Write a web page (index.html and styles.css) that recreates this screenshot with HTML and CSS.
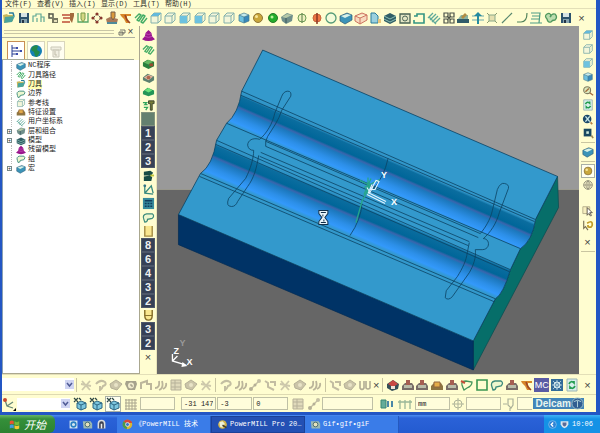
FILE: index.html
```html
<!DOCTYPE html>
<html lang="zh-CN">
<head>
<meta charset="utf-8">
<title>PowerMILL Pro</title>
<link rel="stylesheet" href="styles.css">
</head>
<body>
<svg class="defs" aria-hidden="true">
<symbol id="open" viewBox="0 0 14 14"><path d="M1 4l4-1 1 1 5 0v6l-9 2z" fill="#c7b85c"/><path d="M3 6l10-1-3 6-8 1z" fill="#4aa39b"/><path d="M7 2l4 0 1 3" fill="none" stroke="#287d9c" stroke-width="1.5"/></symbol>
<symbol id="save" viewBox="0 0 14 14"><path d="M2 2h10v10H2z" fill="#2c526e"/><path d="M4 2h6v4H4z" fill="#d6e3e5"/><path d="M4 8h6v4H4z" fill="#87a3ae"/><path d="M5 9h2v3H5z" fill="#234"/></symbol>
<symbol id="path" viewBox="0 0 14 14"><path d="M1 11V5h3V3h5v8M5 11V7M9 6h3v5" fill="none" stroke="#5fa894" stroke-width="1.2"/></symbol>
<symbol id="mill" viewBox="0 0 14 14"><path d="M3 2v5h5M3 3h4v3" fill="none" stroke="#56594c" stroke-width="1.500"/><path d="M6 7h6v5H6z" fill="#777860"/><path d="M8 9h3v2H8z" fill="#e6e0bc"/></symbol>
<symbol id="feed" viewBox="0 0 14 14"><path d="M1 4h8M2 7h7M1 11h8" stroke="#bd4c36" stroke-width="1.600"/><path d="M9 2h4v3l-2 7-2-3z" fill="#a46a3c"/></symbol>
<symbol id="uu" viewBox="0 0 14 14"><path d="M2 2v9h10V2" fill="none" stroke="#56a567" stroke-width="1.300"/><path d="M5 2h4v6l-2 3-2-3z" fill="#d5d884" stroke="#789b48"/></symbol>
<symbol id="dots" viewBox="0 0 14 14"><path d="M7 3l4 4-4 4-4-4z" fill="none" stroke="#555" stroke-dasharray="2 1"/><g fill="#87382d"><circle cx="7" cy="3" r="1.600"/><circle cx="3" cy="7" r="1.600"/><circle cx="11" cy="7" r="1.600"/><circle cx="7" cy="11" r="1.600"/></g></symbol>
<symbol id="tray" viewBox="0 0 14 14"><path d="M1 8l4-2 8 2-1 4H2z" fill="#a97958"/><path d="M2 11h10v2H2z" fill="#4d8b9b"/><path d="M6 1h4v5L8 9 6 6z" fill="#db9b3b" stroke="#77604a"/></symbol>
<symbol id="orange" viewBox="0 0 14 14"><path d="M1 3h11v2H8v2l3 5H7L5 8 2 5z" fill="#d88729"/><path d="M6 4l2 5 3 3" stroke="#9a4526" fill="none" stroke-width="1.500"/></symbol>
<symbol id="zig" viewBox="0 0 14 14"><path d="M1 7l4-4 2 1-4 5 2 1 4-6 2 1-4 6 2 1 4-5" fill="none" stroke="#44ad66" stroke-width="1.400" stroke-linejoin="round"/></symbol>
<symbol id="cube" viewBox="0 0 14 14"><path d="M2 5h7v7H2zM2 5l3-3h7L9 5M12 2v7l-3 3" fill="#f3f6da" stroke="#84b1ac"/></symbol>
<symbol id="cubet" viewBox="0 0 14 14"><path d="M2 5h7v7H2zM2 5l3-3h7L9 5M12 2v7l-3 3" fill="#f3f6da" stroke="#84b1ac"/><path d="M2 5l3-3h7L9 5z" fill="#63b9dc"/></symbol>
<symbol id="cubef" viewBox="0 0 14 14"><path d="M2 5h7v7H2zM2 5l3-3h7L9 5M12 2v7l-3 3" fill="#f3f6da" stroke="#84b1ac"/><path d="M2 5h7v7H2z" fill="#6dc2df"/></symbol>
<symbol id="iso" viewBox="0 0 14 14"><path d="M2 4l5-2 5 2-5 2z" fill="#c6ebec"/><path d="M2 4l5 2v6l-5-2z" fill="#6dc1e0"/><path d="M12 4L7 6v6l5-2z" fill="#3888bb"/><path d="M2 4l5-2 5 2v6l-5 2-5-2zM2 4l5 2 5-2M7 6v6" fill="none" stroke="#44798c" stroke-width=".7"/></symbol>
<symbol id="plane" viewBox="0 0 14 14"><path d="M4 6l4-2 5 2v5l-5 2-4-2z" fill="#7cc6de" stroke="#2b6683"/><path d="M4 6l4 2 5-2M8 8v5" fill="none" stroke="#2b6683"/><path d="M1 1l4 4M5 1L1 5M6 1l2 2" stroke="#2c4644" stroke-width="1.200"/></symbol>
<symbol id="ball" viewBox="0 0 14 14"><circle cx="7" cy="7" r="4.500" fill="#c9a73b" stroke="#917637"/><circle cx="5.500" cy="5.500" r="1.500" fill="#f7e69b"/></symbol>
<symbol id="gball" viewBox="0 0 14 14"><circle cx="7" cy="7" r="4.500" fill="#22ad2a" stroke="#267b28"/><circle cx="6" cy="6" r="1.500" fill="#b9f49c"/></symbol>
<symbol id="shade" viewBox="0 0 14 14"><path d="M1 6l6-4 6 2-1 6-6 3-4-3z" fill="#6f8f8b"/><path d="M2 6l5-3 5 1-6 3z" fill="#b6c9a7"/><path d="M6 7v5" stroke="#39565b"/></symbol>
<symbol id="phi" viewBox="0 0 14 14"><circle cx="7" cy="7" r="4" fill="#eef1bf" stroke="#6c9c55"/><path d="M7 2v10" stroke="#527844"/></symbol>
<symbol id="rphi" viewBox="0 0 14 14"><circle cx="7" cy="7" r="4" fill="#ed7545" stroke="#c8653b"/><path d="M7 2v11" stroke="#8a3924" stroke-width="1.500"/></symbol>
<symbol id="ring" viewBox="0 0 14 14"><circle cx="7" cy="7" r="5" fill="#f4fbd9" stroke="#559b78" stroke-width="1.300"/></symbol>
<symbol id="bcube" viewBox="0 0 14 14"><path d="M1 5l7-3 5 2v5l-7 4-5-3z" fill="#3c94b8" stroke="#315a73" stroke-width=".7"/><path d="M2 5l6-2 4 1-6 3z" fill="#d9f1e7"/></symbol>
<symbol id="rcube" viewBox="0 0 14 14"><path d="M1 5l7-3 5 2v5l-7 4-5-3zM1 5l5 2 7-3M6 7v6" fill="#f8dabd" stroke="#cc7460"/></symbol>
<symbol id="doc" viewBox="0 0 14 14"><path d="M3 2h4l3 3v7H3z" fill="#9bd1df" stroke="#2b7d9c"/><path d="M10 8h3v4h-3z" fill="#eac77b"/></symbol>
<symbol id="layers" viewBox="0 0 14 14"><path d="M1 5l6-3 6 3v5l-6 3-6-3z" fill="#315e66"/><path d="M1 5l6 3 6-3M1 8l6 3 6-3" stroke="#8bbfb3" fill="none"/></symbol>
<symbol id="box" viewBox="0 0 14 14"><path d="M2 3h10v9H2z" fill="#e3e6c4" stroke="#4a6354" stroke-width="1.300"/><circle cx="7" cy="7.500" r="2.500" fill="none" stroke="#4a6354"/></symbol>
<symbol id="brack" viewBox="0 0 14 14"><path d="M2 5h3V3h7v9H2V9" fill="none" stroke="#349582" stroke-width="1.600"/></symbol>
<symbol id="hatch" viewBox="0 0 14 14"><path d="M1 7l5-5M3 9l6-6M5 11l6-6M8 12l5-5M2 6l7 7" stroke="#5fa99a" stroke-width="1.300"/></symbol>
<symbol id="corners" viewBox="0 0 14 14"><path d="M2 2h4v4H2zM8 2h4v4H8zM2 8h4v4H2zM8 8h4v4H8zM5 5l4 4M9 5L5 9" fill="none" stroke="#4b5248" stroke-width="1.200"/></symbol>
<symbol id="plate" viewBox="0 0 14 14"><path d="M1 8h12v4H1z" fill="#315c69"/><path d="M2 8l3-4h7v4z" fill="#89b2a1"/><path d="M5 6l4-4 2 2-4 4" fill="#b28d43"/></symbol>
<symbol id="up" viewBox="0 0 14 14"><path d="M1 5h12M1 9h12" stroke="#6ba9ad"/><path d="M7 1l4 4H8v8H6V5H3z" fill="#238ba0"/></symbol>
<symbol id="cross" viewBox="0 0 14 14"><path d="M2 2l10 10M12 2L2 12" stroke="#8a9c70"/><path d="M4 4h6v6H4z" fill="#e5dfae" stroke="#8aa98a"/></symbol>
<symbol id="line" viewBox="0 0 14 14"><path d="M2 12L12 2" stroke="#58886f" stroke-width="1.200"/></symbol>
<symbol id="arc" viewBox="0 0 14 14"><path d="M2 11h4q6 0 6-9" fill="none" stroke="#51835b" stroke-width="1.200"/></symbol>
<symbol id="lines" viewBox="0 0 14 14"><path d="M2 2h9l-1 10h3M3 5h8M2 8h8M1 12h9" fill="none" stroke="#4f9d86" stroke-width="1.200"/></symbol>
<symbol id="clover" viewBox="0 0 14 14"><path d="M7 5q-1-4-4-2-3 2 0 5 1 4 4 3 1-2 4-2 3-3 0-6-3-1-5 3z" fill="#bcdcae" stroke="#4f985d" stroke-width="1.300"/></symbol>
<symbol id="cone" viewBox="0 0 14 14"><path d="M7 1l3 3 1 4 3 3q-7 4-14 0l3-3 1-4z" fill="#9a168d"/><path d="M4 5q3 2 6 0M3 8q4 2 8 0" stroke="#c24ab5" fill="none"/></symbol>
<symbol id="part" viewBox="0 0 14 14"><path d="M1 6l5-3 7 2v5l-6 3-6-3z" fill="#287f3c"/><path d="M2 6l5-3 5 2-5 3z" fill="#65b660"/><path d="M8 7h4v3H8z" fill="#9a4d31"/></symbol>
<symbol id="part2" viewBox="0 0 14 14"><path d="M1 7l5-4 7 3v4l-5 3-7-3z" fill="#5c806f"/><path d="M2 7l5-3 5 2-5 4z" fill="#e0b59e"/><circle cx="7" cy="7" r="2" fill="#ae674e"/></symbol>
<symbol id="part3" viewBox="0 0 14 14"><path d="M1 7l5-4 7 3v4l-6 2-6-2z" fill="#249657"/><path d="M3 6l4-3 4 3-4 2z" fill="#6be27b"/></symbol>
<symbol id="bolt" viewBox="0 0 14 14"><path d="M7 2h6v3h-2v7H9V5H7z" fill="#777d39" stroke="#3e452e"/><path d="M1 4h4L3 6h3M2 9h4l-2 3" fill="none" stroke="#30a55c" stroke-width="1.300"/></symbol>
<symbol id="stack" viewBox="0 0 14 14"><path d="M2 3l7-1 3 2-2 3H2zM2 8l7-1 2 2-1 4H2z" fill="#174c47"/><path d="M9 7h4" stroke="#c1c536" stroke-width="2"/></symbol>
<symbol id="axis" viewBox="0 0 14 14"><path d="M3 2v9l9 1M3 11l7-8 2 8" fill="none" stroke="#398b7f" stroke-width="1.400"/><circle cx="3" cy="3" r="1.500" fill="#327384"/></symbol>
<symbol id="wax" viewBox="0 0 14 14"><path d="M3 3l2 6 6 2M5 9l6-4" fill="none" stroke="#668878" stroke-width="1.300"/><circle cx="3" cy="3" r="2" fill="#c7492d"/><path d="M14 11v3h-3z"/></symbol>
<symbol id="calc" viewBox="0 0 14 14"><path d="M1 1h12v12H1z" fill="#388b9c"/><path d="M3 4h8M3 7h2M6 7h2M9 7h2M3 10h2M6 10h2M9 10h2" stroke="#123d5d" stroke-width="1.500"/></symbol>
<symbol id="blob" viewBox="0 0 14 14"><path d="M2 9q-2-5 3-6l6 0q3 2 0 5l-5 1q0 3-3 3z" fill="#edf7cf" stroke="#3c8b7b" stroke-width="1.300"/></symbol>
<symbol id="endmill" viewBox="0 0 14 14"><path d="M3 1v11h8V1" fill="#f9e78f" stroke="#a48b43" stroke-width="1.500"/></symbol>
<symbol id="ballmill" viewBox="0 0 14 14"><path d="M3 1v6q0 5 4 5t4-5V1" fill="#f9e78f" stroke="#826a26" stroke-width="1.500"/><path d="M3 7h8" stroke="#826a26"/></symbol>
<symbol id="mag" viewBox="0 0 14 14"><circle cx="6" cy="6" r="4" fill="#dde9bb" stroke="#817e62" stroke-width="1.300"/><path d="M4 8l4-4M9 9l4 3" stroke="#a66e3c" stroke-width="1.600"/></symbol>
<symbol id="refresh" viewBox="0 0 14 14"><path d="M2 1h10v12H2z" fill="#d7efea" stroke="#9cb4b3"/><path d="M4 6q2-4 5-1V3M10 8q-2 4-5 1v2" fill="none" stroke="#239c4e" stroke-width="1.700"/></symbol>
<symbol id="fit" viewBox="0 0 14 14"><circle cx="6" cy="7" r="5" fill="#1c4869"/><path d="M4 4l5 6M9 4l-5 6" stroke="#c9e8e9" stroke-width="1.600"/><path d="M10 11l2 2" stroke="#b88143" stroke-width="2"/></symbol>
<symbol id="zoombox" viewBox="0 0 14 14"><path d="M2 2h9v9H2z" fill="#194860"/><path d="M5 5h3v3H5z" fill="#cce8db"/><path d="M11 10l2 3" stroke="#9b8b59" stroke-width="2"/></symbol>
<symbol id="globe" viewBox="0 0 14 14"><circle cx="7" cy="7" r="5" fill="#f4f0c8" stroke="#85836f"/><path d="M2 7h10M7 2v10M7 2q-5 5 0 10 5-5 0-10" fill="none" stroke="#85836f" stroke-width=".8"/></symbol>
<symbol id="pick" viewBox="0 0 14 14"><path d="M1 2h8v8H1z" fill="#f7eebf" stroke="#b0a987"/><path d="M6 3v9l2-2 2 3 1-1-2-3h3z" fill="#fff" stroke="#494236"/></symbol>
<symbol id="undo" viewBox="0 0 14 14"><path d="M2 2v9l2-2 3 4" fill="none" stroke="#786f52" stroke-width="1.300"/><path d="M6 5q6-4 6 1t-5 3V7" fill="none" stroke="#c19b25" stroke-width="2"/></symbol>
<symbol id="scis" viewBox="0 0 14 14"><path d="M3 3l8 9M11 3l-8 9M2 6l10 2" stroke="#cdc8ab" stroke-width="1.800"/></symbol>
<symbol id="g1" viewBox="0 0 14 14"><path d="M2 6q4-5 9-2 2 3-2 4-1 3-3 4V8" fill="none" stroke="#c3bea2" stroke-width="2"/></symbol>
<symbol id="g2" viewBox="0 0 14 14"><path d="M2 11V5l6-2v3h4v6" fill="none" stroke="#bcb69b" stroke-width="2"/></symbol>
<symbol id="g3" viewBox="0 0 14 14"><path d="M2 2h10v10H2z" fill="#e0dabb" stroke="#b7b29a"/><path d="M2 5h10M2 9h10M6 2v10" stroke="#b7b29a"/></symbol>
<symbol id="g4" viewBox="0 0 14 14"><path d="M1 6l6-4 6 4-5 6-6-2z" fill="#cbc5a8" stroke="#b5b097"/><circle cx="7" cy="7" r="2" fill="#e8e3c6"/></symbol>
<symbol id="clock" viewBox="0 0 14 14"><path d="M2 3h10l1 3-2 6H4L1 6z" fill="#a6a28c"/><circle cx="7" cy="7.500" r="3" fill="#efeacb"/><path d="M7 6v2h2" stroke="#8e8a78" fill="none"/></symbol>
<symbol id="g5" viewBox="0 0 14 14"><path d="M2 3l3 2v4l6 3M7 4h5v4" fill="none" stroke="#c3bda2" stroke-width="2"/></symbol>
<symbol id="g6" viewBox="0 0 14 14"><path d="M1 10q5 0 4-7M5 12q5-2 3-9M9 11q4-2 3-6" fill="none" stroke="#bbb59a" stroke-width="1.800"/></symbol>
<symbol id="gv" viewBox="0 0 14 14"><path d="M3 11l8-8" stroke="#c3bda2" stroke-width="1.300"/><circle cx="3" cy="11" r="2" fill="#b5b096"/><circle cx="11" cy="3" r="2" fill="#c5c0a5"/><circle cx="7" cy="7" r="1.500" fill="#b5b096"/></symbol>
<symbol id="gu" viewBox="0 0 14 14"><path d="M2 3v7q2 3 4 0V3M8 3v7q2 2 4 0V3" fill="none" stroke="#b1ac93" stroke-width="1.600"/></symbol>
<symbol id="grid" viewBox="0 0 14 14"><path d="M2 2v11M5 2v11M8 2v11M11 2v11M1 3h12M1 6h12M1 9h12M1 12h12" stroke="#aaa68e"/></symbol>
<symbol id="stock" viewBox="0 0 14 14"><path d="M1 8l3-3h7l2 3v4H1z" fill="#776d67"/><path d="M3 7h8v3H3z" fill="#b9bca8"/><path d="M5 2h4v5H5z" fill="#a55e50"/></symbol>
<symbol id="stocky" viewBox="0 0 14 14"><path d="M1 8l3-3h7l2 3v4H1z" fill="#8d7541"/><path d="M4 4h6v5H4z" fill="#e4ad4a" stroke="#93673e"/></symbol>
<symbol id="red" viewBox="0 0 14 14"><path d="M1 6l6-4 6 4-1 5-6 2-5-3z" fill="#354f58"/><path d="M2 6l5-4 5 4-5 3z" fill="#c84842"/><path d="M5 8h4v3H5z" fill="#f0e2d5"/></symbol>
<symbol id="gsq" viewBox="0 0 14 14"><path d="M2 2h10v10H2z" fill="none" stroke="#3b9651" stroke-width="1.600"/></symbol>
<symbol id="rblob" viewBox="0 0 14 14"><path d="M2 7q-1-4 4-4l6 1q0 4-5 6l-3 2q-1-2-2-5z" fill="none" stroke="#43955c" stroke-width="1.300"/><path d="M1 3l4 2" stroke="#c54e39" stroke-width="2"/></symbol>
<symbol id="atom" viewBox="0 0 14 14"><path d="M1 1h12v12H1z" fill="#326b99"/><path d="M3 3l8 8M11 3l-8 8M7 2v10M2 7h10" stroke="#a3c8d6"/><circle cx="7" cy="7" r="3" fill="none" stroke="#dceef0"/></symbol>
<symbol id="pause" viewBox="0 0 14 14"><path d="M1 3h5v8H1z" fill="#63ab99" stroke="#3b8574"/><path d="M8 4v6M12 4v6" stroke="#4a87a8" stroke-width="2"/></symbol>
<symbol id="sun" viewBox="0 0 14 14"><circle cx="7" cy="7" r="4" fill="none" stroke="#aeb49a"/><path d="M7 1v12M1 7h12" stroke="#aeb49a"/></symbol>
<symbol id="probe" viewBox="0 0 14 14"><path d="M1 7h4M6 2h5v6l-2 3-3-3zM8 11v3" fill="none" stroke="#abb199" stroke-width="1.200"/></symbol>
<symbol id="rake" viewBox="0 0 14 14"><path d="M2 3v9M7 3v9M12 3v9M0 5h14" stroke="#9bb799" stroke-width="1.300"/></symbol>
<symbol id="tree" viewBox="0 0 14 14"><path d="M3 1v12M3 4h5M3 10h5M3 7h8" fill="none" stroke="#283e93"/><path d="M7 3h2v2H7zM7 9h2v2H7zM11 6h2v2h-2z" fill="#3c4eac"/></symbol>
<symbol id="earth" viewBox="0 0 14 14"><circle cx="7" cy="7" r="6" fill="#1480b5"/><path d="M3 3q4-3 6-1l-1 4 3 2-3 5-2-1-1-4-3-2z" fill="#24894b"/></symbol>
<symbol id="bin" viewBox="0 0 14 14"><path d="M2 3h10v3H2zM4 6h6v7H4z" fill="#f0eee0" stroke="#cbc9b9"/><path d="M6 7v4h2" stroke="#c0bda9" fill="none"/></symbol>
<symbol id="flag" viewBox="0 0 14 14"><path d="M1 3q3-2 5 0v4q-2-2-5 0z" fill="#e95330"/><path d="M7 3q3 2 6 0v4q-3 2-6 0z" fill="#74ba3c"/><path d="M1 8q3-2 5 0v4q-2-2-5 0z" fill="#439cdf"/><path d="M7 8q3 2 6 0v4q-3 2-6 0z" fill="#f4c733"/></symbol>
<symbol id="chrome" viewBox="0 0 14 14"><circle cx="7" cy="7" r="6" fill="#d9b832"/><path d="M7 7L2 3q5-5 10 0l1 2H7z" fill="#d8473a"/><path d="M7 7L2 3q-4 7 4 10z" fill="#499a4c"/><circle cx="7" cy="7" r="2.500" fill="#3976ca" stroke="#eee"/></symbol>
<symbol id="pm" viewBox="0 0 14 14"><circle cx="7" cy="7" r="5.500" fill="#d3b64c"/><path d="M3 4l4-1 3 3-3 5-3-1z" fill="#edf0d8"/><path d="M7 8l5 3" stroke="#453e28" stroke-width="2"/></symbol>
<symbol id="gif" viewBox="0 0 14 14"><path d="M1 3h10l2 3v6H2z" fill="#9bb8b2"/><circle cx="7" cy="7" r="3" fill="#e7e3bc" stroke="#315966"/></symbol>
<symbol id="ie" viewBox="0 0 14 14"><path d="M2 2h10v10H2z" fill="#d4e6ef"/><circle cx="7" cy="7" r="3" fill="none" stroke="#2a7fc3" stroke-width="2"/></symbol>
<symbol id="qq" viewBox="0 0 14 14"><path d="M2 12V6q0-5 5-5t5 5v6z" fill="#d9dde0"/><path d="M4 12V6q0-3 3-3t3 3v6" fill="#3b3f50"/><path d="M6 6h2v6H6z" fill="#eee"/></symbol>
<symbol id="back" viewBox="0 0 14 14"><circle cx="7" cy="7" r="6" fill="#2d83d5" stroke="#97ccf2"/><path d="M8 4L5 7l3 3" fill="none" stroke="#fff" stroke-width="2"/></symbol>
<symbol id="shield" viewBox="0 0 14 14"><path d="M1 2h12v5q-2 5-6 6-4-1-6-6z" fill="#dbe5ec"/><path d="M4 4h6v3q-1 3-3 3-2 0-3-3z" fill="#5b6b99"/></symbol>
</svg>

<div class="app">
<nav class="menu" aria-label="菜单">
<a href="#">文件(F)</a><a href="#">查看(V)</a><a href="#">插入(I)</a><a href="#">显示(D)</a><a href="#">工具(T)</a><a href="#">帮助(H)</a>
</nav>
<div class="bar top">
<div class="group">
<button aria-label="打开"><svg><use href="#open"/></svg></button><button aria-label="保存"><svg><use href="#save"/></svg></button><button aria-label="毛坯"><svg><use href="#path"/></svg></button><button aria-label="铣削"><svg><use href="#mill"/></svg></button><button aria-label="进给率"><svg><use href="#feed"/></svg></button><button aria-label="安全高度"><svg><use href="#uu"/></svg></button><button aria-label="起点"><svg><use href="#dots"/></svg></button><button aria-label="切入切出"><svg><use href="#tray"/></svg></button><button aria-label="刀轴"><svg><use href="#orange"/></svg></button><button aria-label="策略"><svg><use href="#zig"/></svg></button><button aria-label="顶视图"><svg><use href="#cubet"/></svg></button><button aria-label="底视图"><svg><use href="#cube"/></svg></button><button aria-label="前视图"><svg><use href="#cubef"/></svg></button><button aria-label="后视图"><svg><use href="#cubef"/></svg></button><button aria-label="左视图"><svg><use href="#cube"/></svg></button><button aria-label="右视图"><svg><use href="#cube"/></svg></button><button aria-label="等轴视图"><svg><use href="#iso"/></svg></button><button aria-label="阴影"><svg><use href="#ball"/></svg></button><button aria-label="绿色阴影"><svg><use href="#gball"/></svg></button><button aria-label="拔模角"><svg><use href="#shade"/></svg></button><button aria-label="直径"><svg><use href="#phi"/></svg></button><button aria-label="半径"><svg><use href="#rphi"/></svg></button><button aria-label="圆"><svg><use href="#ring"/></svg></button><button aria-label="方块"><svg><use href="#bcube"/></svg></button><button aria-label="线框"><svg><use href="#rcube"/></svg></button><button aria-label="文档"><svg><use href="#doc"/></svg></button><button aria-label="层"><svg><use href="#layers"/></svg></button><button aria-label="区域"><svg><use href="#box"/></svg></button><button aria-label="轮廓"><svg><use href="#brack"/></svg></button><button aria-label="平行"><svg><use href="#hatch"/></svg></button><button aria-label="阵列"><svg><use href="#corners"/></svg></button><button aria-label="平面"><svg><use href="#plate"/></svg></button><button aria-label="提升"><svg><use href="#up"/></svg></button><button aria-label="缩放"><svg><use href="#cross"/></svg></button><button aria-label="直线"><svg><use href="#line"/></svg></button><button aria-label="圆弧"><svg><use href="#arc"/></svg></button><button aria-label="曲线"><svg><use href="#lines"/></svg></button><button aria-label="边界"><svg><use href="#clover"/></svg></button><button aria-label="存盘"><svg><use href="#save"/></svg></button>
</div><button class="x" aria-label="关闭工具栏">×</button>
</div>
<div class="main">
<aside class="explorer">
<div class="caption"><i class="grip"></i><svg class="restore" viewBox="0 0 8 8"><path d="M2 2h5v3H2M1 4h4v3H1z" fill="none" stroke="#555" stroke-width=".8"/></svg><button class="x" aria-label="关闭">×</button></div>
<div class="tabs"><button class="on" aria-label="浏览器"><svg><use href="#tree"/></svg></button><button aria-label="网络"><svg><use href="#earth"/></svg></button><button aria-label="回收站"><svg><use href="#bin"/></svg></button></div>
<ul class="tree">
<li><i></i><svg><use href="#bcube"/></svg>NC程序</li>
<li><i></i><svg><use href="#zig"/></svg>刀具路径</li>
<li><i></i><svg><use href="#open"/></svg><mark>刀具</mark></li>
<li><i></i><svg><use href="#blob"/></svg>边界</li>
<li><i></i><svg><use href="#cube"/></svg>参考线</li>
<li><i></i><svg><use href="#stocky"/></svg>特征设置</li>
<li><i></i><svg><use href="#hatch"/></svg>用户坐标系</li>
<li><i class="plus">+</i><svg><use href="#shade"/></svg>层和组合</li>
<li><i class="plus">+</i><svg><use href="#layers"/></svg>模型</li>
<li><i></i><svg><use href="#cone"/></svg>残留模型</li>
<li><i></i><svg><use href="#blob"/></svg>组</li>
<li><i class="plus">+</i><svg><use href="#bcube"/></svg>宏</li>
</ul>
</aside>
<div class="vbar">
<button aria-label="模型"><svg><use href="#cone"/></svg></button><button aria-label="刀具路径"><svg><use href="#zig"/></svg></button><button aria-label="区域清除"><svg><use href="#part"/></svg></button><button aria-label="残留"><svg><use href="#part2"/></svg></button><button aria-label="精加工"><svg><use href="#part3"/></svg></button><button aria-label="换刀"><svg><use href="#bolt"/></svg></button><button class="swatch" aria-label="颜色"></button><button class="num">1</button><button class="num">2</button><button class="num">3</button><button aria-label="堆叠"><svg><use href="#stack"/></svg></button><button aria-label="坐标系"><svg><use href="#axis"/></svg></button><button aria-label="计算器"><svg><use href="#calc"/></svg></button><button aria-label="边界"><svg><use href="#blob"/></svg></button><button aria-label="端铣刀"><svg><use href="#endmill"/></svg></button><button class="num">8</button><button class="num">6</button><button class="num">4</button><button class="num">3</button><button class="num">2</button><button aria-label="球头刀"><svg><use href="#ballmill"/></svg></button><button class="num">3</button><button class="num">2</button><button class="x" aria-label="关闭">×</button>
</div>
<svg class="view" viewBox="157 26 422 347" preserveAspectRatio="xMidYMid slice" role="img" aria-label="模型视图">
<defs>
<linearGradient id="ga" gradientUnits="userSpaceOnUse" x1="242" y1="91" x2="228" y2="123"><stop offset="0" stop-color="#39c"/><stop offset=".1" stop-color="#2e92c5"/><stop offset=".16" stop-color="#0b6d9f"/><stop offset=".4" stop-color="#069"/><stop offset=".46" stop-color="#3964ac"/><stop offset=".52" stop-color="#1c78bd"/><stop offset=".75" stop-color="#2c8fe8"/><stop offset=".9" stop-color="#3399fb"/><stop offset="1" stop-color="#39c"/></linearGradient>
<linearGradient id="gb" gradientUnits="userSpaceOnUse" x1="217" y1="140" x2="203" y2="173"><stop offset="0" stop-color="#39c"/><stop offset=".1" stop-color="#2e92c5"/><stop offset=".16" stop-color="#0b6d9f"/><stop offset=".4" stop-color="#069"/><stop offset=".46" stop-color="#3964ac"/><stop offset=".52" stop-color="#1c78bd"/><stop offset=".75" stop-color="#2c8fe8"/><stop offset=".9" stop-color="#3399fb"/><stop offset="1" stop-color="#39c"/></linearGradient>
</defs>
<path d="M0 0h800v189H0z" fill="#999"/><path d="M0 189h800v400H0z" fill="#666"/>
<path d="M557 176l1 31-85 162v-29l22-42q8-5 15-29l10-21q12-8 15-29z" fill="#066e69" stroke="#094c50" stroke-width=".7"/>
<path d="M179 214l294 126v29L179 244z" fill="#036" stroke="#002b55" stroke-width=".7"/>
<path d="M263 50l294 126-22 43q-3 21-15 29l-10 21q-7 24-15 29l-22 42-294-126 22-41q12-8 16-33l10-17q12-10 15-32z" fill="#39c"/>
<path d="M242 91q-3 22-15 32l293 125q12-8 15-29z" fill="url(#ga)"/>
<path d="M217 140q-4 25-16 33l294 125q8-5 15-29z" fill="url(#gb)"/>
<g fill="none" stroke="#0b4263" stroke-width=".8">
<path d="M263 50l294 126-22 43q-3 21-15 29l-10 21q-7 24-15 29l-22 42-294-126 22-41q12-8 16-33l10-17q12-10 15-32z"/>
<path d="M242 91l293 128M241 95l293 126M227 123l293 125M217 140l293 129M216 144l293 127M201 173l294 125M200 176l294 125M266 141l214 92M266 146l212 91M261 152l208 89M260 156l208 89"/>
<path d="M266 146q-1-5 2-10c5-8 11-16 14-26l9-14q1-5-3-5-4 0-6 5l-7 17c-2 10-8 20-15 26-7-2-12 1-12 6q1 5 6 5c0 8-3 18-8 28l-17 20q-3 8 3 8 4 0 6-5l10-15c6-8 9-18 11-31"/>
<path d="M480 233c5-6 10-14 12-23l5-21q3-7 7-6 5 1 4 5l-9 24c-3 11-9 20-16 26 7 0 7 11-1 11h-7c1 8-2 16-6 23l-17 24q-4 4-7 1l1-7 11-14c5-8 9-16 10-24l2-10"/>
<path d="M388 158q-4 19-16 32M362 203q-1 16-12 32"/>
</g>
<path d="M368 177v17M360 180l10 5-8 16-6 21M364 187l16-8M364 194l7-16" fill="none" stroke="#27a68a" stroke-width="1.300"/>
<path d="M368 192l18 9M367 194l18 9M368 193l4-9M371 189l5-9 3 1-4 8zM367 187l3 5 3-6" fill="none" stroke="#e3f4ff" stroke-width="1.100"/>
<g class="axes"><text x="381" y="178">Y</text><text x="391" y="204">X</text></g>
<path d="M319 210h9v3l-3 4 3 4v3h-9v-3l3-4-3-4z" fill="#e8f4fa" stroke="#12304b"/><path d="M321 212h5M321 222h5M323 214v2M324 219v2" stroke="#12304b"/>
<path d="M173 353v7l13 4M173 360l5-5" fill="none" stroke="#fff" stroke-width="1.300"/><path d="M183 361l5 4-6 1z" fill="#fff"/><g class="axes"><text x="174" y="353">Z</text><text x="187" y="364">X</text><text x="180" y="345" fill-opacity=".35">Y</text></g>
</svg>
<div class="rbar">
<button aria-label="顶视"><svg><use href="#cubet"/></svg></button><button aria-label="侧视"><svg><use href="#cube"/></svg></button><button aria-label="前视"><svg><use href="#cubef"/></svg></button><button aria-label="等轴"><svg><use href="#iso"/></svg></button><button aria-label="缩放"><svg><use href="#mag"/></svg></button><button aria-label="刷新"><svg><use href="#refresh"/></svg></button><button aria-label="全屏"><svg><use href="#fit"/></svg></button><button aria-label="框选缩放"><svg><use href="#zoombox"/></svg></button><hr><button aria-label="毛坯"><svg><use href="#bcube"/></svg></button><hr><button class="pressed" aria-label="阴影"><svg><use href="#ball"/></svg></button><button aria-label="线框"><svg><use href="#globe"/></svg></button><span class="space"></span><button aria-label="选取"><svg><use href="#pick"/></svg></button><button aria-label="撤销"><svg><use href="#undo"/></svg></button><button class="x" aria-label="关闭">×</button><hr>
</div>
</div>
<div class="bar edit">
<select class="combo path-combo" aria-label="刀具路径"><option></option></select><i class="sep"></i>
<div class="group n9"><button aria-label="剪裁"><svg><use href="#scis"/></svg></button><button aria-label="移动"><svg><use href="#g1"/></svg></button><button aria-label="变换"><svg><use href="#g4"/></svg></button><button aria-label="时间"><svg><use href="#clock"/></svg></button><button aria-label="连接"><svg><use href="#g2"/></svg></button><button aria-label="分割"><svg><use href="#g6"/></svg></button><button aria-label="表格"><svg><use href="#g3"/></svg></button><button aria-label="复制"><svg><use href="#g4"/></svg></button><button aria-label="删除"><svg><use href="#scis"/></svg></button></div><i class="sep"></i>
<div class="group n7"><button aria-label="圆角"><svg><use href="#g1"/></svg></button><button aria-label="偏置"><svg><use href="#g6"/></svg></button><button aria-label="点"><svg><use href="#gv"/></svg></button><button aria-label="路径"><svg><use href="#g5"/></svg></button><button aria-label="重排"><svg><use href="#scis"/></svg></button><button aria-label="碰撞"><svg><use href="#g4"/></svg></button><button aria-label="投影"><svg><use href="#g6"/></svg></button></div><i class="sep"></i>
<div class="group n3"><button aria-label="更新"><svg><use href="#g5"/></svg></button><button aria-label="移位"><svg><use href="#g4"/></svg></button><button aria-label="刀具"><svg><use href="#gu"/></svg></button></div><button class="x slim" aria-label="关闭">×</button><i class="sep"></i>
<div class="group n13"><button aria-label="仿真"><svg><use href="#red"/></svg></button><button aria-label="毛坯一"><svg><use href="#stock"/></svg></button><button aria-label="毛坯二"><svg><use href="#stock"/></svg></button><button aria-label="毛坯三"><svg><use href="#stocky"/></svg></button><button aria-label="毛坯四"><svg><use href="#stock"/></svg></button><button aria-label="曲线编辑"><svg><use href="#rblob"/></svg></button><button aria-label="矩形"><svg><use href="#gsq"/></svg></button><button aria-label="边界"><svg><use href="#blob"/></svg></button><button aria-label="加载"><svg><use href="#stock"/></svg></button><button aria-label="刀具"><svg><use href="#orange"/></svg></button><button class="mc">MC</button><button aria-label="网格"><svg><use href="#atom"/></svg></button><button aria-label="刷新"><svg><use href="#refresh"/></svg></button></div><button class="x" aria-label="关闭">×</button>
</div>
<div class="bar status">
<button aria-label="工作平面"><svg><use href="#wax"/></svg></button><select class="combo plane-combo" aria-label="坐标系"><option></option></select>
<div class="planes"><button aria-label="XY"><svg><use href="#plane"/></svg></button><button aria-label="YZ"><svg><use href="#plane"/></svg></button><button class="pressed" aria-label="ZX"><svg><use href="#plane"/></svg></button></div>
<button class="wide" aria-label="栅格"><svg><use href="#grid"/></svg></button><input class="field" aria-label="栅格尺寸"><span class="gap"></span><input class="field" aria-label="X" value="-31 147"><input class="field" aria-label="Y" value="-3"><input class="field" aria-label="Z" value="0">
<button class="wide" aria-label="计算"><svg><use href="#g3"/></svg></button><button aria-label="测量"><svg><use href="#gv"/></svg></button><input class="field long" aria-label="命令"><span class="gap"></span><button class="wide" aria-label="暂停"><svg><use href="#pause"/></svg></button><button class="wide" aria-label="单位"><svg><use href="#rake"/></svg></button><input class="field" aria-label="单位" value="mm"><button aria-label="公差"><svg><use href="#sun"/></svg></button><input class="field" aria-label="公差值"><button aria-label="余量"><svg><use href="#probe"/></svg></button><input class="field tiny" aria-label="余量值">
<div class="brand">Delcam<svg viewBox="0 0 14 14"><circle cx="7" cy="7" r="6" fill="#315d91" stroke="#a1c4cc"/><path d="M3 5q4-3 8 0M7 4v7" fill="none" stroke="#b5d5db"/></svg></div>
</div>
</div>
<footer class="taskbar">
<button class="start"><svg><use href="#flag"/></svg>开始</button>
<div class="quick"><button aria-label="浏览器"><svg><use href="#ie"/></svg></button><button aria-label="桌面"><svg><use href="#gif"/></svg></button><button aria-label="QQ"><svg><use href="#qq"/></svg></button></div>
<button class="task"><svg><use href="#chrome"/></svg><span>《PowerMILL 技术</span></button>
<button class="task active"><svg><use href="#pm"/></svg><span>PowerMILL Pro 20…</span></button>
<button class="task"><svg><use href="#gif"/></svg><span>Gif•gIf•giF</span></button>
<div class="tray"><svg><use href="#back"/></svg><svg><use href="#shield"/></svg><time>10:06</time></div>
</footer>
</body>
</html>
```
FILE: styles.css
```css
* { box-sizing: border-box; }
body {
  margin: 0;
  height: 100vh;
  display: flex;
  flex-direction: column;
  overflow: hidden;
  font: 7px/9px "Liberation Mono", "Noto Sans CJK SC", monospace;
  color: #222;
  background: #2a60d6;
}
.defs { position: absolute; width: 0; height: 0; }
button {
  display: flex;
  align-items: center;
  justify-content: center;
  min-width: 0;
  padding: 0;
  border: 0;
  background: none;
  font: inherit;
  color: inherit;
}
button svg { width: 14px; height: 14px; flex: none; }
.app {
  flex: 1;
  min-height: 0;
  display: flex;
  flex-direction: column;
  background: #fffdd0;
  border: solid #2356c4;
  border-width: 0 4px 3px 2px;
}
.menu {
  height: 8px;
  display: flex;
  align-items: center;
  gap: 2px;
  padding-left: 3px;
}
.menu a {
  flex: none;
  width: 30px;
  color: #34342c;
  text-decoration: none;
  white-space: nowrap;
  line-height: 8px;
}
.bar { display: flex; align-items: center; }
.top { height: 18px; border-top: 1px solid #e3dfb8; padding-right: 6px; }
.group { display: flex; flex: 1; min-width: 0; }
.group button { flex: 1; }
.n9 { flex: 9; }
.n7 { flex: 7; }
.n3 { flex: 3; }
.n13 { flex: 13; }
.mc { background: #5a5ba4; color: #fff; font: 9px/14px "Liberation Sans", sans-serif; }
.x { width: 17px; height: 12px; font: 11px/12px "Liberation Sans", sans-serif; color: #444; }
.slim { width: 8px; }
.main { flex: 1; min-height: 0; display: flex; }

.explorer { width: 138px; flex: none; display: flex; flex-direction: column; border-right: 1px solid #aaa78f; }
.caption { display: flex; align-items: center; height: 12px; border-bottom: 1px solid #aeb0a3; margin-right: 4px; }
.caption .x { width: 9px; font-size: 10px; }
.grip { flex: 1; height: 4px; border: solid #c9c6a6; border-width: 1px 0; margin: 0 4px 0 2px; }
.restore { width: 8px; height: 8px; }
.tabs { display: flex; gap: 2px; padding: 3px 0 0 5px; height: 22px; border-bottom: 1px solid #a6ac9b; margin-right: 5px; }
.tabs button { width: 18px; background: #fffef0; border: solid #d9d6bd; border-width: 1px 1px 0; }
.tabs .on { background: #fff; border-color: #c78e54; }
.tree {
  flex: 1;
  margin: 0;
  padding: 1px 0 0 4px;
  list-style: none;
  background: #fff;
  border-left: 1px solid #8ba1b2;
  border-bottom: 1px solid #aaa78f;
  display: grid;
  grid-template-columns: 1fr;
  grid-auto-rows: minmax(9px, 3%);
  align-content: start;
}
.tree li { display: flex; align-items: center; color: #222; white-space: nowrap; }
.tree svg { width: 10px; height: 10px; flex: none; margin: 0 2px 0 4px; }
.tree i { width: 5px; height: 100%; border-right: 1px dotted #bbb; font-style: normal; flex: none; }
.tree .plus { height: 5px; border: 1px solid #788; font: 5px/3px "Liberation Sans", sans-serif; text-align: center; }
.tree mark { background: #fffdb0; color: inherit; }

.vbar { width: 17px; flex: none; display: flex; flex-direction: column; align-items: center; padding-top: 2px; border-right: 1px solid #e8e4ba; }
.vbar button { width: 14px; height: 14px; flex: none; }
.vbar svg { width: 13px; height: 13px; }
.vbar .num { background: #364156; border: 1px solid #4e586a; color: #eef0f0; font: bold 11px/12px "Liberation Sans", sans-serif; }
.vbar .swatch { background: #64806f; border: 1px solid #82937e; }
.view { flex: 1; min-width: 0; width: 100%; height: 100%; display: block; }
.axes { font: bold 9px "Liberation Sans", sans-serif; fill: #fff; }

.rbar { width: 17px; flex: none; display: flex; flex-direction: column; align-items: center; padding-top: 2px; }
.rbar button { width: 14px; height: 14px; flex: none; }
.rbar svg { width: 12px; height: 12px; }
.rbar .x { width: 12px; margin-top: 3px; }
.rbar hr { width: 14px; margin: 2px 0; border: 0; border-top: 1px solid #c9c5a1; }
.pressed { background: #fffff0; border: 1px solid #a9b0a5; }
.space { height: 12px; flex: none; }

.edit { height: 21px; border-bottom: 1px solid #dedab2; border-top: 1px solid #e3dfb8; }
.sep { width: 1px; height: 14px; margin: 0 2px; background: #c9c5a1; }
.combo {
  appearance: none;
  height: 13px;
  border: 0;
  padding: 0;
  border-radius: 0;
  background: #fff url("data:image/svg+xml,%3Csvg xmlns='http://www.w3.org/2000/svg' viewBox='0 0 9 9'%3E%3Cpath d='M0 0h9v9H0z' fill='%23cfd4f2'/%3E%3Cpath d='M2 3l2.500 3L7 3' fill='none' stroke='%23505c96' stroke-width='1.500'/%3E%3C/svg%3E") right center / 9px 9px no-repeat;
}
.path-combo { width: 72px; }
.plane-combo { width: 53px; height: 12px; }
.status { height: 17px; gap: 1px; }
.status > button { width: 14px; flex: none; }
.status > .wide { width: 17px; }
.planes { display: flex; gap: 2px; padding-left: 2px; }
.field {
  flex: 34 1 0;
  min-width: 0;
  height: 13px;
  padding: 0 2px;
  border: 1px solid #bfc0a6;
  border-radius: 0;
  background: #fffddb;
  font: inherit;
  color: #222;
}
.long { flex-grow: 52; }
.tiny { flex-grow: 12; border-right: 0; }
.gap { width: 4px; flex: none; }
.brand {
  flex: none;
  display: flex;
  align-items: center;
  margin-right: 12px;
  height: 11px;
  padding-left: 2px;
  background: #4385b8;
  color: #e7f5ef;
  font: bold 10px/11px "Liberation Sans", sans-serif;
}
.brand svg { width: 13px; height: 13px; }

.taskbar {
  height: 18px;
  flex: none;
  display: flex;
  align-items: stretch;
  background: linear-gradient(#4c8df0, #2a62d8 3px, #245bd0);
  color: #fff;
}
.start {
  width: 55px;
  gap: 4px;
  background: linear-gradient(#68b566, #35903a 4px, #2c8231);
  border-radius: 0 6px 6px 0;
  font: italic 11px/14px "Noto Sans CJK SC", sans-serif;
}
.start svg { width: 11px; height: 11px; }
.quick { display: flex; align-items: center; gap: 3px; width: 62px; padding-left: 2px; justify-content: center; }
.quick svg { width: 11px; height: 11px; }
.task {
  flex: 0 1 94px;
  justify-content: flex-start;
  gap: 2px;
  padding-left: 5px;
  margin-top: 1px;
  background: #3a7ce8;
  border-right: 1px solid #2459bf;
  white-space: nowrap;
}
.task svg { width: 11px; height: 11px; }
.active { background: #2350b4; border: 1px solid #1b4198; }
.tray {
  margin-left: auto;
  display: flex;
  align-items: center;
  gap: 3px;
  padding: 0 7px 0 4px;
  background: linear-gradient(#3fb2f5, #1592e6 4px);
}
.tray svg { width: 9px; height: 9px; }
```
